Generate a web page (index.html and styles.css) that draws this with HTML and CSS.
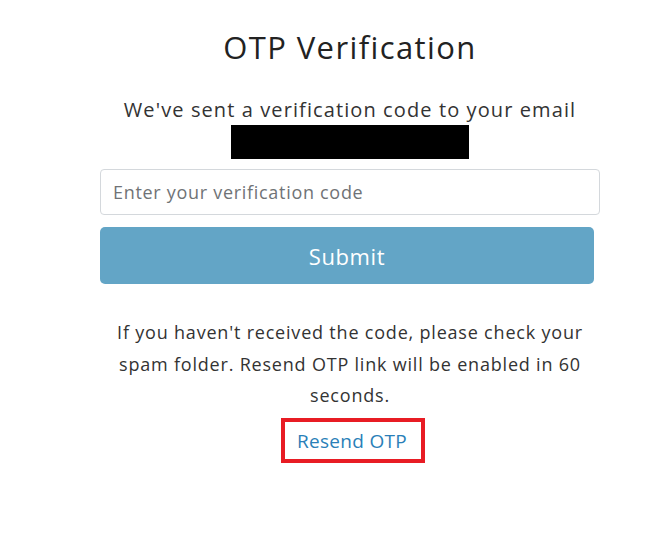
FILE: index.html
```html
<!DOCTYPE html>
<html lang="en">
<head>
<meta charset="utf-8">
<title>OTP Verification</title>
<link rel="stylesheet" href="styles.css">
</head>
<body>
<main class="card">
  <h1 class="title">OTP Verification</h1>
  <p class="lead">We've sent a verification code to your email</p>
  <div class="redacted"></div>
  <input class="code-input" type="text" placeholder="Enter your verification code">
  <button class="submit" type="button">Submit</button>
  <p class="note">If you haven't received the code, please check your spam folder. Resend OTP link will be enabled in 60 seconds.</p>
  <div class="resend-row">
    <a class="resend" href="#">Resend OTP</a>
  </div>
</main>
</body>
</html>
```
FILE: styles.css
```css
html, body {
  margin: 0;
  padding: 0;
  background: #ffffff;
}
body {
  font-family: "Open Sans", "Noto Sans", sans-serif;
  color: #333333;
}
.card {
  width: 500px;
  margin-left: 100px;
  display: flex;
  flex-direction: column;
  align-items: center;
  padding-top: 26px;
}
.title {
  margin: 0;
  font-size: 31px;
  font-weight: 400;
  line-height: 42px;
  letter-spacing: 1.4px;
  color: #222222;
}
.lead {
  margin: 28px 0 0;
  font-size: 20px;
  font-weight: 400;
  line-height: 28px;
  letter-spacing: 1.1px;
  color: #333333;
}
.redacted {
  width: 238px;
  height: 34px;
  background: #000000;
  margin-top: 1px;
}
.code-input {
  box-sizing: border-box;
  align-self: stretch;
  margin-top: 10px;
  height: 46px;
  border: 1px solid #d4d8dc;
  border-radius: 4px;
  padding: 0 12px;
  font-family: inherit;
  font-size: 18px;
  letter-spacing: 0.7px;
  color: #333;
  background: #fff;
  outline: none;
}
.code-input::placeholder {
  color: #707376;
}
.submit {
  align-self: flex-start;
  width: 494px;
  height: 57px;
  margin-top: 12px;
  border: none;
  border-radius: 5px;
  background: #63a5c6;
  color: #ffffff;
  font-family: inherit;
  font-size: 22px;
  letter-spacing: 0.6px;
  padding: 0;
}
.note {
  margin: 33px 0 0;
  width: 472px;
  text-align: center;
  font-size: 18px;
  line-height: 31.5px;
  letter-spacing: 0.8px;
  color: #333333;
}
.resend-row {
  margin-top: 6px;
  margin-left: 6px;
  border: 4px solid #e81c24;
  padding: 5px 14px 4px 12px;
}
.resend {
  color: #2a7fb8;
  text-decoration: none;
  font-size: 19px;
  line-height: 28px;
  letter-spacing: 0.3px;
}
```
